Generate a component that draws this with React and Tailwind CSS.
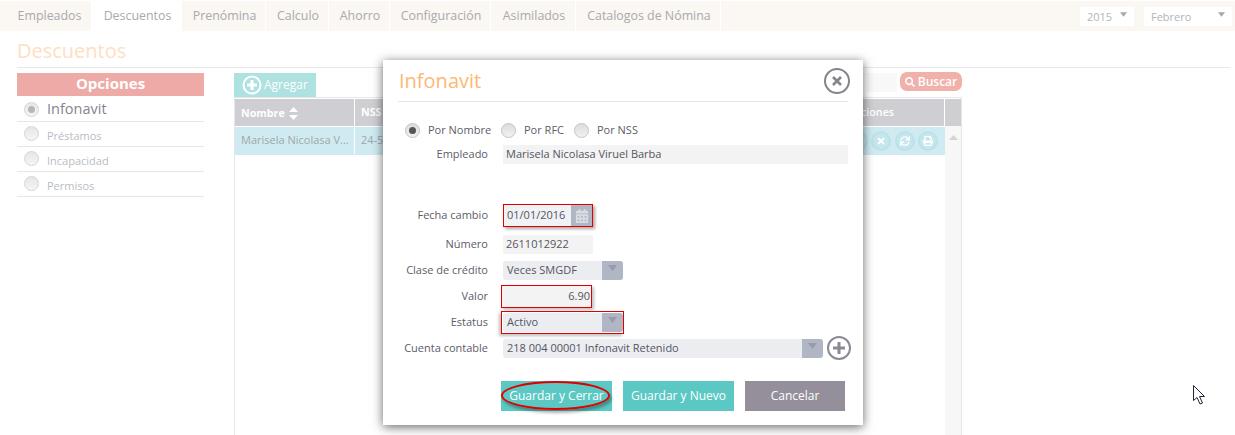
import { FaSearch, FaTimes, FaSync, FaPrint, FaCalendarAlt, FaPencilAlt } from 'react-icons/fa';

const tabs = [
  { label: 'Empleados', w: 'w-[86px]' },
  { label: 'Descuentos', w: 'w-[90px]', active: true },
  { label: 'Prenómina', w: 'w-[84px]' },
  { label: 'Calculo', w: 'w-[63px]' },
  { label: 'Ahorro', w: 'w-[61px]' },
  { label: 'Configuración', w: 'w-[101px]' },
  { label: 'Asimilados', w: 'w-[85px]' },
  { label: 'Catalogos de Nómina', w: 'w-[145px]' },
];

const opciones = [
  { label: 'Infonavit', active: true },
  { label: 'Préstamos' },
  { label: 'Incapacidad' },
  { label: 'Permisos' },
];

function Radio({ checked, faded }) {
  return (
    <span className={`flex h-[15px] w-[15px] shrink-0 items-center justify-center rounded-full border border-[#c4c4c4] bg-gradient-to-b from-[#dcdcdc] to-[#f2f2f2] ${faded ? 'opacity-70' : ''}`}>
      {checked && <span className={`h-[7px] w-[7px] rounded-full ${faded ? 'bg-[#999]' : 'bg-[#555]'}`}></span>}
    </span>
  );
}

function Caret({ className = '' }) {
  return (
    <svg width="7" height="5" viewBox="0 0 9 6" className={className}>
      <path d="M0 0h9L4.5 6z" fill="currentColor" />
    </svg>
  );
}

function RoundIcon({ icon: Icon }) {
  return (
    <span className="flex h-[20px] w-[20px] items-center justify-center rounded-full border-2 border-[#b9e3e8] bg-[#c4e6ec] text-white">
      <Icon size={10} />
    </span>
  );
}

function Row({ label, className = '', children }) {
  return (
    <div className={`flex items-center ${className}`}>
      <span className="w-[90px] shrink-0 text-right text-[11px] text-[#5d5d68]">{label}</span>
      <div className="ml-[15px] flex min-w-0 flex-1 items-center">{children}</div>
    </div>
  );
}

function Select({ value, w }) {
  return (
    <div className={`flex h-[19px] shrink-0 items-center justify-between overflow-hidden rounded-[3px] bg-[#ecedf1] pl-[4px] text-[11px] text-[#55555f] ${w}`}>
      <span>{value}</span>
      <span className="flex h-full w-[21px] justify-center bg-[#b0b6c3] pt-[4px] text-[#969cab]">
        <svg width="9" height="6" viewBox="0 0 9 6">
          <path d="M0 0h9L4.5 6z" fill="currentColor" />
        </svg>
      </span>
    </div>
  );
}

export default function App() {
  return (
    <div className="relative h-[435px] w-[1235px] overflow-hidden bg-white font-['Open_Sans',sans-serif]">
      {/* Top nav */}
      <div className="mt-px flex h-[30px] items-stretch bg-[#fbf7f2] pl-[6px]">
        {tabs.map((t) => (
          <div
            key={t.label}
            className={`flex items-center justify-center whitespace-nowrap border-r border-white pl-[2px] text-[12.4px] text-[#a9a9ae] ${t.w} ${t.active ? 'bg-white' : ''}`}
          >
            {t.label}
          </div>
        ))}
        <div className="ml-auto flex items-center gap-[10px] pr-[3px]">
          <div className="flex h-[19px] w-[54px] items-start justify-between bg-white pl-[7px] pr-[7px] text-[11px] leading-[20px] text-[#b4b4b8]">
            <span>2015</span>
            <Caret className="mt-[5px] text-[#a8a8a8]" />
          </div>
          <div className="flex h-[19px] w-[88px] items-start justify-between bg-white pl-[7px] pr-[7px] text-[11px] leading-[20px] text-[#b4b4b8]">
            <span>Febrero</span>
            <Caret className="mt-[5px] text-[#a8a8a8]" />
          </div>
        </div>
      </div>

      {/* Page heading */}
      <div className="ml-[17px] mr-[5px] h-[37px] border-b border-[#e8e8ea]">
        <h1 className="pt-[5px] text-[20px] leading-[30px] text-[#fde0c2]">Descuentos</h1>
      </div>

      <div className="ml-[17px] mt-[5px] flex">
        {/* Opciones */}
        <div className="w-[187px]">
          <div className="mb-px flex h-[23px] items-center justify-center bg-[#eeaaa6] pb-[2px] text-[15px] font-bold text-white">Opciones</div>
          {opciones.map((o) => (
            <div
              key={o.label}
              className={`flex h-[25px] gap-[8px] border-b border-[#e6e6e6] pl-[7px] ${o.active ? 'items-center text-[14.5px] text-[#85858e]' : 'items-start pt-[4px] text-[11px] text-[#b8bcc4]'}`}
            >
              <Radio checked={o.active} faded />
              <span className={o.active ? '' : 'mt-[2px]'}>{o.label}</span>
            </div>
          ))}
        </div>

        {/* Grid */}
        <div className="ml-[30px] w-[728px]">
          <div className="flex h-[24px] items-start justify-between">
            <div className="flex h-[24px] w-[82px] items-center gap-[2px] bg-[#ade2e0] pl-[8px] text-[12px] text-white">
              <svg width="20" height="20" viewBox="0 0 20 20">
                <circle cx="10" cy="10" r="8.5" fill="none" stroke="white" strokeWidth="2" />
                <path d="M10 5v10M5 10h10" stroke="white" strokeWidth="3" />
              </svg>
              Agregar
            </div>
            <div className="flex items-start gap-[3px]">
              <div className="h-[19px] w-[30px] bg-[#f8f8f8]"></div>
              <div className="-mt-px flex h-[19px] w-[62px] items-center justify-center gap-[3px] rounded-[7px] bg-[#f0b1aa] text-[12px] font-semibold text-white">
                <FaSearch size={10} />
                Buscar
              </div>
            </div>
          </div>
          <div className="h-[340px] border-x border-t border-[#e6e6e8] pt-px">
            <div className="flex h-[27px] text-[10.7px] font-bold text-white">
              <div className="flex w-[120px] items-center gap-[4px] border-r border-white bg-[#cfced3] pl-[6px] pt-px">
                Nombre
                <svg width="9" height="13" viewBox="0 0 9 13">
                  <path d="M4.5 0 9 5H0zM4.5 13 0 8h9z" fill="white" />
                </svg>
              </div>
              <div className="flex flex-1 items-center border-r border-white bg-[#cfced3] pl-[6px]">NSS</div>
              <div className="flex w-[102px] items-center justify-end border-r border-white bg-[#cfced3] pr-[50px] font-semibold">Acciones</div>
              <div className="w-[16px] bg-[#cfced3]"></div>
            </div>
            <div className="flex h-full">
              <div className="flex-1">
                <div className="mt-px flex h-[28px] items-center bg-[#cfebf1] pb-px text-[11px] text-[#9fa7aa]">
                  <div className="flex h-full w-[120px] items-center border-r border-white pl-[6px]">Marisela Nicolasa V...</div>
                  <div className="flex-1 pl-[6px]">24-5</div>
                  <div className="flex gap-[3.5px] pr-[7px]">
                    <RoundIcon icon={FaPencilAlt} />
                    <RoundIcon icon={FaTimes} />
                    <RoundIcon icon={FaSync} />
                    <RoundIcon icon={FaPrint} />
                  </div>
                </div>
              </div>
              <div className="flex w-[16px] justify-center bg-[#f7f7f7] pt-[9px] text-[#d4d4d4]">
                <svg width="9" height="5" viewBox="0 0 9 5">
                  <path d="M4.5 0 9 5H0z" fill="currentColor" />
                </svg>
              </div>
            </div>
          </div>
        </div>
      </div>

      {/* Modal */}
      <div className="absolute left-[383px] top-[60px] h-[365px] w-[480px] bg-white px-[15px] shadow-[0_2px_10px_rgba(0,0,0,0.6)]">
        <div className="flex h-[42px] items-center justify-between border-b border-[#e4e4e4]">
          <h2 className="pl-px text-[20px] text-[#fdb874]">Infonavit</h2>
          <svg width="26" height="26" viewBox="0 0 26 26" className="-mr-[2px]">
            <circle cx="13" cy="13" r="12" fill="none" stroke="#84848e" strokeWidth="2" />
            <path d="m9 9 8 8M17 9l-8 8" stroke="#84848e" strokeWidth="2.6" />
          </svg>
        </div>

        <div className="mt-[20px] flex h-[16px] items-center pl-[7px] text-[11px] text-[#5d5d68]">
          <Radio checked />
          <span className="ml-[8px] w-[73px]">Por Nombre</span>
          <Radio />
          <span className="ml-[8px] w-[50px]">Por RFC</span>
          <Radio />
          <span className="ml-[8px]">Por NSS</span>
        </div>

        <Row label="Empleado" className="mt-[7px]">
          <div className="flex h-[19px] flex-1 items-center bg-[#f3f3f3] pl-[3px] text-[11px] text-[#55555f]">Marisela Nicolasa Viruel Barba</div>
        </Row>

        <Row label="Fecha cambio" className="mt-[40px]">
          <div className="flex h-[23px] w-[90px] items-stretch border border-[#e00000] bg-[#f1f2f5] text-[11px] text-[#55555f] shadow-[2px_2px_3px_rgba(0,0,0,0.35)]">
            <span className="flex flex-1 items-center pl-[3px]">01/01/2016</span>
            <span className="flex w-[21px] items-center justify-center bg-[#b0b6c3] text-[#d9dce3]">
              <FaCalendarAlt size={14} />
            </span>
          </div>
        </Row>

        <Row label="Número" className="mt-[8px]">
          <div className="flex h-[19px] w-[90px] items-center bg-[#f3f3f3] pl-[3px] text-[11px] text-[#55555f]">2611012922</div>
        </Row>

        <Row label="Clase de crédito" className="mt-[7px]">
          <Select value="Veces SMGDF" w="w-[120px]" />
        </Row>

        <Row label="Valor" className="mt-[5px]">
          <div className="-ml-[2px] flex h-[23px] w-[91px] items-center justify-end border border-[#e00000] bg-[#f3f3f3] pr-[1px] text-[11px] text-[#55555f] shadow-[2px_2px_3px_rgba(0,0,0,0.25)]">6.90</div>
        </Row>

        <Row label="Estatus" className="mt-[3px]">
          <div className="-ml-[2px] flex h-[23px] w-[123px] items-center border border-[#e00000] pl-px shadow-[-2px_2px_3px_rgba(0,0,0,0.25)]">
            <Select value="Activo" w="w-[120px]" />
          </div>
        </Row>

        <Row label="Cuenta contable" className="mt-[2px]">
          <Select value="218 004 00001 Infonavit Retenido" w="w-[320px]" />
          <svg width="24" height="24" viewBox="0 0 24 24" className="ml-[4px] shrink-0">
            <circle cx="12" cy="12" r="11" fill="none" stroke="#8a8a94" strokeWidth="2" />
            <path d="M12 6v12M6 12h12" stroke="#8a8a94" strokeWidth="3" />
          </svg>
        </Row>

        <div className="mt-[21px] flex pl-[103px] text-[12px] text-white">
          <div className="relative flex h-[30px] w-[111px] items-center justify-center bg-[#5bc8c3]">
            Guardar y Cerrar
            <span className="absolute left-0 top-0 h-[29px] w-[109px] rounded-[50%] border-2 border-[#e00000] shadow-[2px_3px_3px_rgba(0,0,0,0.3)]"></span>
          </div>
          <div className="ml-[11px] flex h-[30px] w-[111px] items-center justify-center bg-[#5bc8c3]">Guardar y Nuevo</div>
          <div className="ml-[11px] flex h-[30px] w-[100px] items-center justify-center bg-[#948f9b]">Cancelar</div>
        </div>
      </div>

      {/* Mouse cursor */}
      <svg width="13" height="21" viewBox="0 0 13 21" className="absolute left-[1193px] top-[385px]">
        <path d="M.5.5v15l3.5-3 3 6.5 2.5-1-3-6.5h5z" fill="white" stroke="#23233a" strokeWidth="1" />
      </svg>
    </div>
  );
}
